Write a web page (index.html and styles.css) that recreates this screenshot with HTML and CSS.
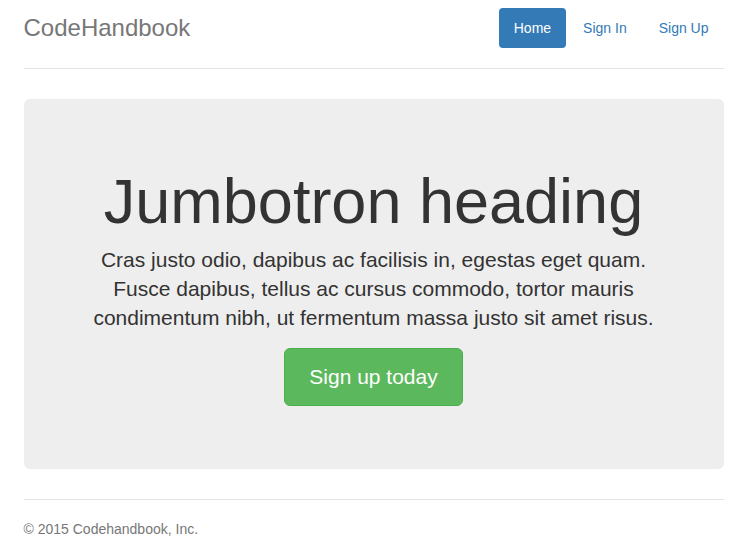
FILE: index.html
```html
<!DOCTYPE html>
<html lang="en">
<head>
  <meta charset="UTF-8" />
  <meta name="viewport" content="width=device-width, initial-scale=1.0"/>
  <title>CodeHandbook</title>
  <link rel="stylesheet" href="styles.css">
</head>
<body>
  <div class="container">
    <header class="header">
      <h3 class="brand">CodeHandbook</h3>
      <nav>
        <ul class="nav-pills">
          <li class="active"><a href="#">Home</a></li>
          <li><a href="#">Sign In</a></li>
          <li><a href="#">Sign Up</a></li>
        </ul>
      </nav>
    </header>

    <div class="jumbotron">
      <h1>Jumbotron heading</h1>
      <p class="lead">Cras justo odio, dapibus ac facilisis in, egestas eget quam. Fusce dapibus, tellus ac cursus commodo, tortor mauris condimentum nibh, ut fermentum massa justo sit amet risus.</p>
      <p><a class="btn-success" href="#" role="button">Sign up today</a></p>
    </div>

    <footer class="footer">
      <p>&copy; 2015 Codehandbook, Inc.</p>
    </footer>
  </div>
</body>
</html>
```

FILE: styles.css
```css
* {
  box-sizing: border-box;
}
body {
  font-family: "Liberation Sans", Arial, sans-serif;
  font-size: 14px;
  line-height: 1.42857143;
  color: #333;
  background: #fff;
  margin: 0;
}
a {
  text-decoration: none;
}
.container {
  max-width: 730px;
  margin: 0 auto;
  padding: 8px 15px 0;
}
.header {
  display: flex;
  justify-content: space-between;
  align-items: center;
  padding-bottom: 20px;
  border-bottom: 1px solid #e5e5e5;
  margin-bottom: 30px;
}
.brand {
  margin: 0;
  font-size: 24px;
  font-weight: 400;
  line-height: 40px;
  color: #777;
}
.nav-pills {
  display: flex;
  list-style: none;
  margin: 0;
  padding: 0;
}
.nav-pills li {
  margin-left: 2px;
}
.nav-pills a {
  display: block;
  padding: 10px 15px;
  line-height: 20px;
  color: #337ab7;
  border-radius: 4px;
}
.nav-pills .active a {
  color: #fff;
  background: #337ab7;
}
.jumbotron {
  background: #eee;
  border-radius: 6px;
  padding: 48px 60px;
  margin-bottom: 30px;
  text-align: center;
}
.jumbotron h1 {
  font-size: 63px;
  font-weight: 400;
  line-height: 1.1;
  margin: 20px 0 10px;
}
.jumbotron p {
  font-size: 21px;
  line-height: 1.37;
  margin: 0 0 15px;
}
.btn-success {
  display: inline-block;
  padding: 14px 24px;
  font-size: 21px;
  line-height: 1.3333333;
  color: #fff;
  background: #5cb85c;
  border: 1px solid #4cae4c;
  border-radius: 6px;
}
.footer {
  padding-top: 19px;
  border-top: 1px solid #e5e5e5;
  color: #777;
}
.footer p {
  margin: 0 0 10px;
}
```
